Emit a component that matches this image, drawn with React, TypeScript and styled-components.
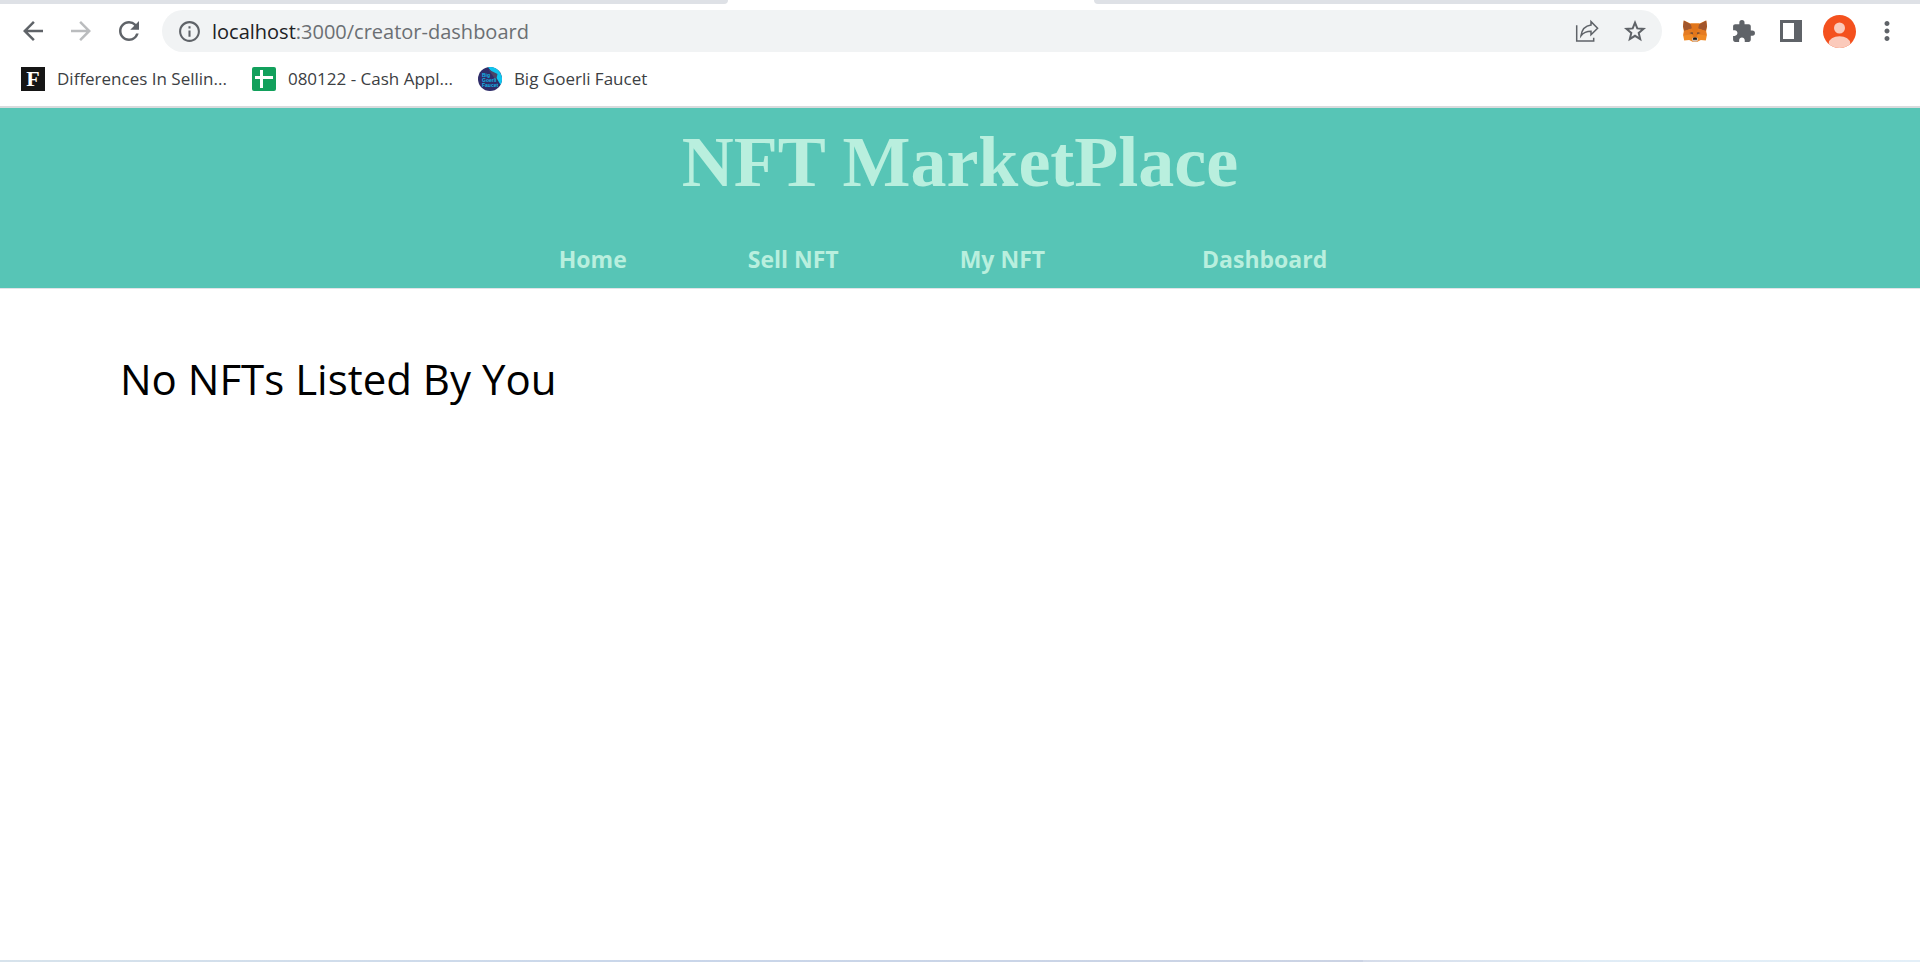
import React from "react";
import styled, { createGlobalStyle } from "styled-components";
import { MdArrowBack, MdArrowForward, MdRefresh, MdInfoOutline, MdExtension, MdMoreVert } from "react-icons/md";

const GlobalStyle = createGlobalStyle`
  *, *::before, *::after { box-sizing: border-box; }
  body { margin: 0; background: #fff; font-family: "Open Sans", "Noto Sans", sans-serif; }
`;

const Page = styled.div`
  min-height: 100vh;
  display: flex;
  flex-direction: column;
`;

const TabStrip = styled.div`
  height: 4px;
  display: flex;
`;

const TabEdge = styled.div<{ $side: "left" | "right" }>`
  flex: ${(p) => (p.$side === "left" ? "728 1 0" : "826 1 0")};
  background: #dee1e6;
  border-radius: ${(p) => (p.$side === "left" ? "0 0 6px 0" : "0 0 0 6px")};
`;

const ActiveTab = styled.div`
  flex: 366 1 0;
`;

const Toolbar = styled.div`
  height: 54px;
  display: flex;
  align-items: center;
  padding: 0 18px;
`;

const ButtonGroup = styled.div`
  display: flex;
  flex: none;
  gap: 18px;
`;

const IconButton = styled.button<{ $muted?: boolean }>`
  width: 30px;
  height: 30px;
  padding: 0;
  border: 0;
  background: none;
  color: ${(p) => (p.$muted ? "#babcbe" : "#5f6368")};
  display: flex;
  align-items: center;
  justify-content: center;
  svg { display: block; flex: none; }
`;

const AddressBar = styled.div`
  flex: 1;
  height: 42px;
  margin: 0 18px;
  border-radius: 21px;
  background: #f1f3f4;
  display: flex;
  align-items: center;
  padding: 0 12px;
  gap: 8px;
`;

const Url = styled.a`
  flex: 1;
  padding-top: 2px;
  font-size: 20px;
  line-height: 28px;
  color: #6b6f73;
  text-decoration: none;
`;

const UrlHost = styled.span`
  color: #202124;
`;

const Bookmarks = styled.nav`
  height: 50px;
  display: flex;
  align-items: center;
  gap: 25px;
  padding: 0 21px 6px;
  border-bottom: 2px solid #d9dbdd;
`;

const Bookmark = styled.a`
  display: flex;
  align-items: center;
  gap: 12px;
  font-size: 17px;
  line-height: 24px;
  color: #3c4043;
  text-decoration: none;
  white-space: nowrap;
  svg { display: block; flex: none; }
`;

const Header = styled.header`
  height: 181px;
  display: flex;
  flex-direction: column;
  align-items: center;
  background: #57c5b6;
  border-bottom: 1px solid #e2e3e8;
  color: #b9efde;
`;

const Title = styled.h1`
  margin: 12px 0 0;
  font: 700 72px/84px "Liberation Serif", serif;
`;

const SiteNav = styled.nav`
  display: flex;
  gap: 121px;
  margin-top: 39px;
  padding-right: 34px;
`;

const NavLink = styled.a<{ $apart?: boolean }>`
  margin-left: ${(p) => (p.$apart ? "36px" : "0")};
  font-weight: 700;
  font-size: 23px;
  line-height: 32px;
  color: inherit;
  text-decoration: none;
`;

const Main = styled.main`
  flex: 1;
  padding: 60px 120px;
`;

const EmptyMessage = styled.h2`
  margin: 0;
  font-weight: 400;
  font-size: 42px;
  line-height: 60px;
  color: #000;
`;

const BottomEdge = styled.footer`
  height: 2px;
  background: linear-gradient(90deg, #d7e3ec, #c9d6ea 34%, #cbd3e4 71%, #d5dcea 71%, #e0ecf6 83%, #e3eff8);
`;

const ShareIcon = () => (
  <svg width="24" height="24" viewBox="0 0 24 24" fill="none" stroke="currentColor" strokeWidth="1.5">
    <path d="M1.7 6.2V22h17v-3.2" />
    <path d="M16 2.600 22.600 9.200 16 15.800v-3.600c-4.800 0-7.700 1.500-10 4.500C6.900 10.300 10.500 6.700 16 6z" />
  </svg>
);

const StarIcon = () => (
  <svg width="24" height="24" viewBox="0 0 24 24" fill="none" stroke="currentColor" strokeWidth="2">
    <path d="m12 3.600 2.300 5.800 6.200.5-4.800 4 1.500 6.200-5.200-3.300-5.200 3.300 1.500-6.200-4.800-4 6.200-.5z" />
  </svg>
);

const FoxIcon = () => (
  <svg width="24" height="22" viewBox="0 0 24 22">
    <path fill="#f08a24" d="M.8.4 7.500 3.600h9L23.200.4 24 6.500 23.200 11l.6 4.600-1 5-5-.6-3.800 1.900h-4L6.200 20l-5 .6-1-5L.8 11 0 6.500z" />
    <path fill="#e2761b" d="M7.500 3.600h9l-1.700 6.700-.9 8.200h-3.800l-.9-8.200z" />
    <path fill="#a2562b" d="M.8.4 7.800 4.200 9 8.600 1.300 11 0 6.300z" />
    <path fill="#a2562b" d="M23.200.4 16.200 4.200 15 8.600 22.700 11 24 6.300z" />
    <path fill="#e57b22" d="m1.300 11 7.500-2.400.8 5.700-9.300 1.300zM22.700 11l-7.500-2.400-.8 5.700 9.300 1.300z" />
    <path fill="#6f4a35" d="m6.400 13 3.100-1 .7 2.600zM17.600 13l-3.100-1-.7 2.600z" />
    <path fill="#d4bfb2" d="m9.200 18.300 1.300-.8h3l1.300.8.1 2.100-1.200 1.300h-3.400l-1.200-1.300z" />
    <path fill="#161616" d="m10.200 17.900.6-.5h2.400l.6.500.2 1.900h-4z" />
  </svg>
);

const SidePanelIcon = () => (
  <svg width="22" height="22" viewBox="0 0 22 22">
    <path fill="currentColor" fillRule="evenodd" d="M0 0h22v22H0zM3 3v16h11V3z" />
  </svg>
);

const AvatarIcon = () => (
  <svg width="33" height="33" viewBox="0 0 33 33">
    <defs><clipPath id="avatar"><circle cx="16.500" cy="16.500" r="16.500" /></clipPath></defs>
    <g clipPath="url(#avatar)">
      <path fill="#f4511e" d="M0 0h33v33H0z" />
      <circle cx="16.500" cy="13" r="5.500" fill="#fbcabb" />
      <ellipse cx="16.500" cy="28.500" rx="10.800" ry="7.300" fill="#fbcabb" />
    </g>
  </svg>
);

const ForbesIcon = () => (
  <svg width="24" height="24" viewBox="0 0 24 24">
    <path fill="#151515" d="M0 0h24v24H0z" />
    <text x="12" y="19" textAnchor="middle" fill="#fff" fontFamily="Liberation Serif, serif" fontWeight="700" fontSize="22">F</text>
  </svg>
);

const SheetIcon = () => (
  <svg width="24" height="24" viewBox="0 0 24 24">
    <rect width="24" height="24" rx="2" fill="#12a05c" />
    <path fill="#fff" d="M8 3h3v6h10v3H11v9H8v-9H3V9h5z" />
  </svg>
);

const FaucetIcon = () => (
  <svg width="24" height="24" viewBox="0 0 24 24">
    <circle cx="12" cy="12" r="12" fill="#2f2d69" />
    <path fill="#0fc6ef" d="M10 .2A12 12 0 0 1 22.500 17.700L18.500 11z" />
    <path fill="#4a4668" d="m10.500 2.500 9 4.500-1.500 6.500z" />
    <g fill="#12b5e5" fontFamily="Liberation Sans, sans-serif" fontWeight="700" fontSize="5">
      <text x="4" y="9.500">Big</text>
      <text x="4" y="15">Goerli</text>
      <text x="4" y="20">Faucet</text>
    </g>
  </svg>
);

export default function App() {
  return (
    <Page>
      <GlobalStyle />
      <TabStrip>
        <TabEdge $side="left" />
        <ActiveTab />
        <TabEdge $side="right" />
      </TabStrip>
      <Toolbar>
        <ButtonGroup>
          <IconButton aria-label="Back"><MdArrowBack size={30} /></IconButton>
          <IconButton aria-label="Forward" $muted><MdArrowForward size={30} /></IconButton>
          <IconButton aria-label="Reload"><MdRefresh size={30} /></IconButton>
        </ButtonGroup>
        <AddressBar>
          <IconButton aria-label="Site information"><MdInfoOutline size={25} /></IconButton>
          <Url href="#"><UrlHost>localhost</UrlHost>:3000/creator-dashboard</Url>
          <ButtonGroup>
            <IconButton aria-label="Share"><ShareIcon /></IconButton>
            <IconButton aria-label="Bookmark this page"><StarIcon /></IconButton>
          </ButtonGroup>
        </AddressBar>
        <ButtonGroup>
          <IconButton aria-label="MetaMask"><FoxIcon /></IconButton>
          <IconButton aria-label="Extensions"><MdExtension size={25} /></IconButton>
          <IconButton aria-label="Side panel"><SidePanelIcon /></IconButton>
          <IconButton aria-label="Profile"><AvatarIcon /></IconButton>
          <IconButton aria-label="Menu"><MdMoreVert size={30} /></IconButton>
        </ButtonGroup>
      </Toolbar>
      <Bookmarks aria-label="Bookmarks">
        <Bookmark href="#"><ForbesIcon />Differences In Sellin...</Bookmark>
        <Bookmark href="#"><SheetIcon />080122 - Cash Appl...</Bookmark>
        <Bookmark href="#"><FaucetIcon />Big Goerli Faucet</Bookmark>
      </Bookmarks>
      <Header>
        <Title>NFT MarketPlace</Title>
        <SiteNav aria-label="Site">
          <NavLink href="#">Home</NavLink>
          <NavLink href="#">Sell NFT</NavLink>
          <NavLink href="#">My NFT</NavLink>
          <NavLink href="#" $apart>Dashboard</NavLink>
        </SiteNav>
      </Header>
      <Main>
        <EmptyMessage>No NFTs Listed By You</EmptyMessage>
      </Main>
      <BottomEdge />
    </Page>
  );
}
